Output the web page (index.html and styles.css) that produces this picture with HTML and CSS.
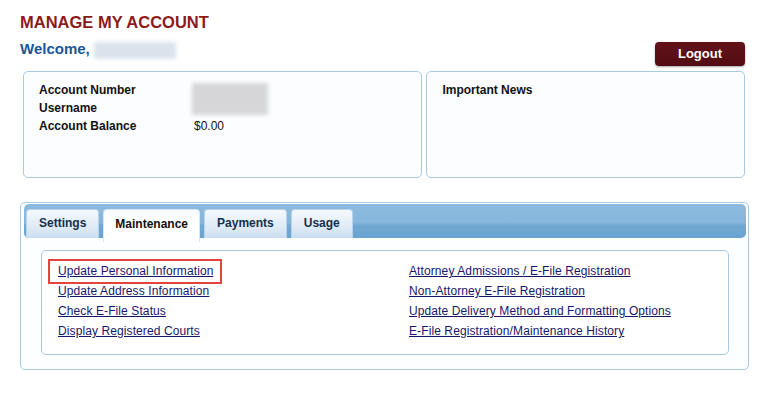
FILE: index.html
```html
<!DOCTYPE html>
<html lang="en">
<head>
  <meta charset="UTF-8" />
  <title>Manage My Account</title>
  <link rel="stylesheet" href="styles.css">
</head>
<body>
  <div class="page">
    <h1>MANAGE MY ACCOUNT</h1>

    <div class="welcome-row">
      <div class="welcome">Welcome, <span class="blur name-blur"></span></div>
      <a class="logout" href="#">Logout</a>
    </div>

    <div class="info-row">
      <div class="panel account">
        <div class="account-grid">
          <div class="label">Account Number</div>
          <div class="value id-cell"><span class="blur id-blur"></span></div>
          <div class="label">Username</div>
          <div class="label">Account Balance</div>
          <div class="value">$0.00</div>
        </div>
      </div>
      <div class="panel news">
        <div class="label">Important News</div>
      </div>
    </div>

    <div class="tab-box">
      <div class="tab-bar">
        <div class="tab">Settings</div>
        <div class="tab active">Maintenance</div>
        <div class="tab">Payments</div>
        <div class="tab">Usage</div>
      </div>

      <div class="tab-content">
        <div class="links">
          <a href="#" class="marked">Update Personal Information</a>
          <a href="#">Attorney Admissions / E-File Registration</a>
          <a href="#">Update Address Information</a>
          <a href="#">Non-Attorney E-File Registration</a>
          <a href="#">Check E-File Status</a>
          <a href="#">Update Delivery Method and Formatting Options</a>
          <a href="#">Display Registered Courts</a>
          <a href="#">E-File Registration/Maintenance History</a>
        </div>
      </div>
    </div>
  </div>
</body>
</html>
```

FILE: styles.css
```css
* {
  box-sizing: border-box;
}

body {
  margin: 0;
  background-color: #fff;
  font-family: "Liberation Sans", Arial, sans-serif;
  color: #111;
}

.page {
  width: 760px;
  padding: 11px 15px 0 20px;
}

h1 {
  margin: 0;
  font-size: 16.5px;
  line-height: 22px;
  color: #8c1a1a;
}

.welcome-row {
  display: flex;
  justify-content: space-between;
  align-items: flex-start;
  margin-top: 7px;
}

.welcome {
  display: flex;
  align-items: flex-start;
  font-size: 15px;
  font-weight: bold;
  line-height: 18px;
  color: #1b5797;
}

.blur {
  display: block;
  filter: blur(2px);
}

.name-blur {
  width: 82px;
  height: 17px;
  margin: 2px 0 0 4px;
  background-color: #dae3ec;
}

.logout {
  width: 90px;
  height: 24px;
  margin-top: 2px;
  border-radius: 4px;
  background: linear-gradient(#62131a, #520c12);
  box-shadow: 0 1px 2px rgba(0, 0, 0, 0.35);
  color: #fff;
  font-size: 13px;
  font-weight: bold;
  line-height: 24px;
  text-align: center;
  text-decoration: none;
}

.info-row {
  display: flex;
  gap: 4px;
  margin: 5px 0 0 3px;
}

.panel {
  height: 107px;
  border: 1px solid #a9c9e3;
  border-radius: 5px;
  background-color: #fbfdfe;
  padding: 9px 15px;
}

.account {
  width: 400px;
}

.news {
  width: 319px;
}

.label {
  font-size: 12px;
  font-weight: bold;
  line-height: 18px;
}

.account-grid {
  display: grid;
  grid-template-columns: 155px 1fr;
  grid-auto-rows: 18px;
  font-size: 12px;
  line-height: 18px;
}

.account-grid .label {
  grid-column: 1;
}

.id-cell {
  grid-column: 2;
  grid-row: 1 / span 2;
}

.id-blur {
  width: 76px;
  height: 32px;
  margin: 2px 0 0 -2px;
  background-color: #d6d6d8;
}

.value {
  grid-column: 2;
}

.tab-box {
  width: 729px;
  height: 168px;
  margin-top: 24px;
  border: 1px solid #a9c9e3;
  border-radius: 5px;
  background-color: #fdfeff;
  padding: 0 2px 0 3px;
}

.tab-bar {
  display: flex;
  align-items: flex-end;
  gap: 4px;
  height: 34px;
  margin-top: 1px;
  padding-left: 2px;
  border-radius: 5px;
  background: linear-gradient(#8dbbdf, #86b6dc 55%, #72a9d4 62%, #6aa3d0);
}

.tab {
  height: 29px;
  padding: 0 12px;
  border: 1px solid #b9d3ea;
  border-bottom: none;
  border-radius: 4px 4px 0 0;
  background: linear-gradient(#f5f9fd, #dbe8f5 70%, #c9dcef);
  color: #14304e;
  font-size: 12px;
  font-weight: bold;
  line-height: 27px;
}

.tab.active {
  height: 33px;
  margin-bottom: -4px;
  padding: 0 11px 4px;
  border-color: #d6e6f3;
  background: linear-gradient(#f7fafd, #fff 40%);
  color: #111;
  line-height: 29px;
}

.tab-content {
  padding: 12px 17px 0 17px;
}

.tab-content .links {
  height: 105px;
  border: 1px solid #a9c9e3;
  border-radius: 5px;
  background-color: #fff;
  padding: 10px 16px;
  display: grid;
  grid-template-columns: 351px 1fr;
  grid-auto-rows: 20px;
}

.links a {
  justify-self: start;
  color: #17176a;
  font-size: 12px;
  line-height: 20px;
  letter-spacing: 0.1px;
  text-decoration: underline;
}

.links a.marked {
  position: relative;
}

.links a.marked::after {
  content: "";
  position: absolute;
  left: -10px;
  right: -9px;
  top: -2px;
  bottom: -3px;
  border: 2px solid #e2443b;
}
```
